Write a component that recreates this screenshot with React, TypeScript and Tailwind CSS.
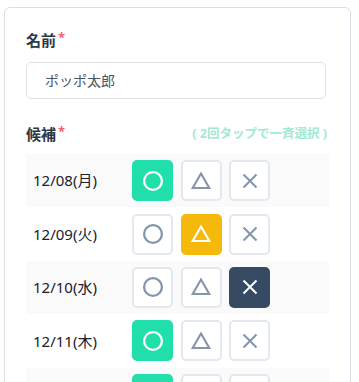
import React from "react";

type Mark = "o" | "t" | "x" | null;

const rows: { date: string; sel: Mark }[] = [
  { date: "12/08(月)", sel: "o" },
  { date: "12/09(火)", sel: "t" },
  { date: "12/10(水)", sel: "x" },
  { date: "12/11(木)", sel: "o" },
  { date: "12/12(金)", sel: "o" },
];

function Icon({ kind, color }: { kind: "o" | "t" | "x"; color: string }) {
  if (kind === "o")
    return (
      <svg width="24" height="24" viewBox="0 0 24 24">
        <circle cx="12" cy="12" r="8.9" fill="none" stroke={color} strokeWidth="2.3" />
      </svg>
    );
  if (kind === "t")
    return (
      <svg width="24" height="24" viewBox="0 0 24 24">
        <path d="M12 4.6 L20.3 19 L3.7 19 Z" fill="none" stroke={color} strokeWidth="2.1" strokeLinejoin="miter" />
      </svg>
    );
  return (
    <svg width="24" height="24" viewBox="0 0 24 24">
      <path d="M5.5 5.5 L18.5 18.5 M18.5 5.5 L5.5 18.5" fill="none" stroke={color} strokeWidth="2" />
    </svg>
  );
}

function Btn({ kind, active }: { kind: "o" | "t" | "x"; active: boolean }) {
  const activeBg =
    kind === "o" ? "bg-[#20dfaa] border-[#20dfaa]" : kind === "t" ? "bg-[#f5b90c] border-[#f5b90c]" : "bg-[#364a63] border-[#364a63]";
  return (
    <div
      className={
        "w-[41px] h-[41px] rounded-[5px] border-2 flex items-center justify-center " +
        (active ? activeBg : "bg-white border-[#e3e8f0]")
      }
    >
      <Icon kind={kind} color={active ? "#ffffff" : "#8495ab"} />
    </div>
  );
}

export default function App() {
  return (
    <div
      className="w-[359px] h-[382px] overflow-hidden bg-white pt-[7px] pl-[4px]"
      style={{ fontFamily: '"Noto Sans", "Noto Sans CJK JP", sans-serif' }}
    >
      <div className="w-[347px] h-[400px] border border-[#dcdde6] rounded-[6px] bg-white pt-[22px] px-[21px]">
        <div className="flex items-start text-[15px] font-bold leading-[20px] text-[#2d3748]">
          名前<span className="text-[#f0607a] text-[13px] leading-[14px] ml-[2px]">*</span>
        </div>
        <div className="mt-[12px] w-[300px] h-[37px] border border-[#dfe1e6] rounded-[5px] flex items-center pl-[18px] text-[14px] text-[#4a5568]">
          ポッポ太郎
        </div>
        <div className="mt-[25px] flex items-center justify-between h-[20px]">
          <div className="flex items-start text-[15px] font-bold leading-[20px] text-[#2d3748]">
            候補<span className="text-[#f0607a] text-[13px] leading-[14px] ml-[2px]">*</span>
          </div>
          <div className="text-[12.5px] font-bold text-[#a3e8d3] mr-[2px]">( 2回タップで一斉選択 )</div>
        </div>
        <div className="mt-[10px] flex flex-col">
          {rows.map((r, i) => (
            <div
              key={r.date}
              className={"h-[53.4px] flex items-center pl-[7px] " + (i % 2 === 0 ? "bg-[#fafafa]" : "bg-white")}
            >
              <div className="w-[99px] text-[15px] text-[#1a202c]">{r.date}</div>
              <div className="flex gap-[7.5px]">
                <Btn kind="o" active={r.sel === "o"} />
                <Btn kind="t" active={r.sel === "t"} />
                <Btn kind="x" active={r.sel === "x"} />
              </div>
            </div>
          ))}
        </div>
      </div>
    </div>
  );
}
